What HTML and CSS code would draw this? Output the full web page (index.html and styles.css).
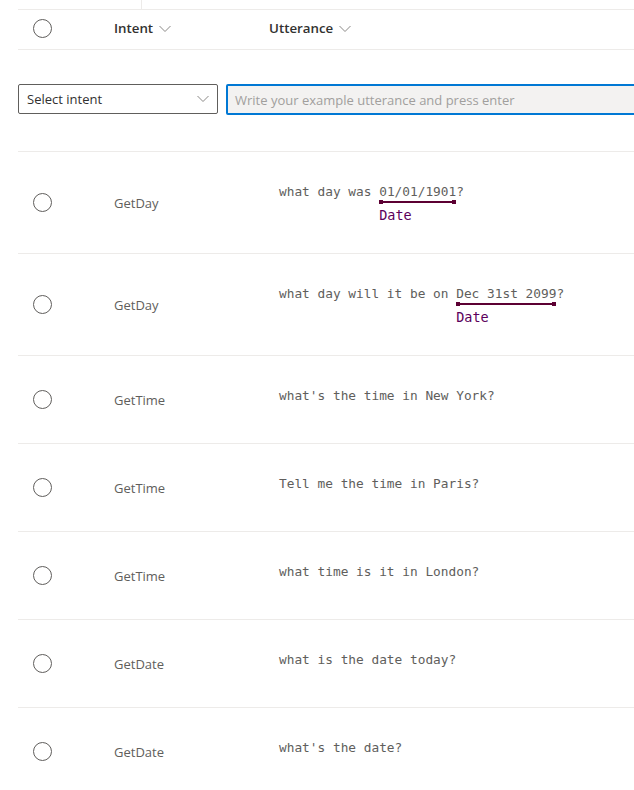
FILE: index.html
```html
<!DOCTYPE html>
<html>
<head>
<meta charset="utf-8">
<link rel="stylesheet" href="styles.css">
</head>
<body>
<div class="page">
  <div class="stub"><div class="stub-cell"></div></div>
  <div class="head">
    <div class="cell check"><span class="radio"></span></div>
    <div class="cell hcol">Intent <svg class="chev" viewBox="0 0 12 8" width="12" height="8"><path d="M0.5 1 L6 6.5 L11.5 1" fill="none" stroke="#8a8886" stroke-width="1"/></svg></div>
    <div class="cell hcol">Utterance <svg class="chev" viewBox="0 0 12 8" width="12" height="8"><path d="M0.5 1 L6 6.5 L11.5 1" fill="none" stroke="#8a8886" stroke-width="1"/></svg></div>
  </div>
  <div class="entry">
    <div class="select"><span>Select intent</span><svg viewBox="0 0 12 8" width="12" height="8"><path d="M0.5 1 L6 6.5 L11.5 1" fill="none" stroke="#8a8886" stroke-width="1"/></svg></div>
    <div class="input">Write your example utterance and press enter</div>
  </div>
  <div class="list">
    <div class="row tall">
      <div class="cell check"><span class="radio"></span></div>
      <div class="cell intent">GetDay</div>
      <div class="cell utt">what day was <span class="ent"><span class="ent-text">01/01/1901</span><span class="ent-line"></span><span class="ent-label">Date</span></span>?</div>
    </div>
    <div class="row tall">
      <div class="cell check"><span class="radio"></span></div>
      <div class="cell intent">GetDay</div>
      <div class="cell utt">what day will it be on <span class="ent"><span class="ent-text">Dec 31st 2099</span><span class="ent-line"></span><span class="ent-label">Date</span></span>?</div>
    </div>
    <div class="row">
      <div class="cell check"><span class="radio"></span></div>
      <div class="cell intent">GetTime</div>
      <div class="cell utt">what's the time in New York?</div>
    </div>
    <div class="row">
      <div class="cell check"><span class="radio"></span></div>
      <div class="cell intent">GetTime</div>
      <div class="cell utt">Tell me the time in Paris?</div>
    </div>
    <div class="row">
      <div class="cell check"><span class="radio"></span></div>
      <div class="cell intent">GetTime</div>
      <div class="cell utt">what time is it in London?</div>
    </div>
    <div class="row">
      <div class="cell check"><span class="radio"></span></div>
      <div class="cell intent">GetDate</div>
      <div class="cell utt">what is the date today?</div>
    </div>
    <div class="row">
      <div class="cell check"><span class="radio"></span></div>
      <div class="cell intent">GetDate</div>
      <div class="cell utt">what's the date?</div>
    </div>
  </div>
</div>
</body>
</html>
```

FILE: styles.css
```css
html, body {
  margin: 0;
  padding: 0;
  background: #ffffff;
  overflow: hidden;
}
body {
  font-family: "Open Sans", "Noto Sans", Arial, sans-serif;
  font-size: 13px;
  color: #323130;
}
.page {
  width: 800px;
  padding-left: 18px;
}
.stub {
  height: 9px;
  border-bottom: 1px solid #edebe9;
  display: flex;
}
.stub-cell {
  width: 123px;
  height: 9px;
  border-right: 1px solid #edebe9;
}
.head, .row {
  display: grid;
  grid-template-columns: 96px 155px 1fr;
  border-bottom: 1px solid #edebe9;
  box-sizing: border-box;
}
.head {
  height: 40px;
  align-items: center;
  padding-bottom: 3px;
}
.cell {
  display: flex;
  align-items: center;
}
.check {
  padding-left: 15px;
}
.head .check {
  margin-top: 1px;
}
.radio {
  display: block;
  width: 17px;
  height: 17px;
  border: 1px solid #605e5c;
  border-radius: 50%;
}
.hcol {
  font-weight: 600;
  font-size: 13.3px;
  color: #323130;
  gap: 6px;
}
.chev {
  margin-top: 1px;
}
.entry {
  display: flex;
  gap: 8px;
  padding-top: 34px;
  height: 102px;
  box-sizing: border-box;
  border-bottom: 1px solid #edebe9;
}
.select {
  width: 200px;
  height: 30px;
  box-sizing: border-box;
  border: 1px solid #605e5c;
  border-radius: 2px;
  display: flex;
  align-items: center;
  justify-content: space-between;
  padding: 0 8px 0 8px;
  color: #323130;
}
.input {
  width: 520px;
  height: 31px;
  box-sizing: border-box;
  border: 2px solid #0078d4;
  border-radius: 2px;
  background: #f3f2f1;
  color: #a19f9d;
  display: flex;
  align-items: center;
  padding-left: 7px;
}
.row {
  height: 88px;
  align-items: stretch;
}
.row.tall {
  height: 102px;
}
.intent {
  color: #605e5c;
}
.utt {
  display: block;
  padding-left: 10px;
  padding-top: 30px;
  font-family: "DejaVu Sans Mono", "Liberation Mono", monospace;
  font-size: 12.8px;
  line-height: 20px;
  color: #605e5c;
  white-space: pre;
}
.ent {
  display: inline-block;
  vertical-align: top;
}
.ent-text {
  display: block;
}
.ent-line {
  display: block;
  height: 2px;
  background: #5c0033;
  margin-top: -1px;
  position: relative;
}
.ent-line::before, .ent-line::after {
  content: "";
  position: absolute;
  top: -1px;
  width: 4px;
  height: 4px;
  background: #5c0033;
}
.ent-line::before { left: 0; }
.ent-line::after { right: 0; }
.ent-label {
  display: block;
  color: #5c005c;
  line-height: 20px;
  margin-top: 2px;
  font-size: 13.5px;
}
```
